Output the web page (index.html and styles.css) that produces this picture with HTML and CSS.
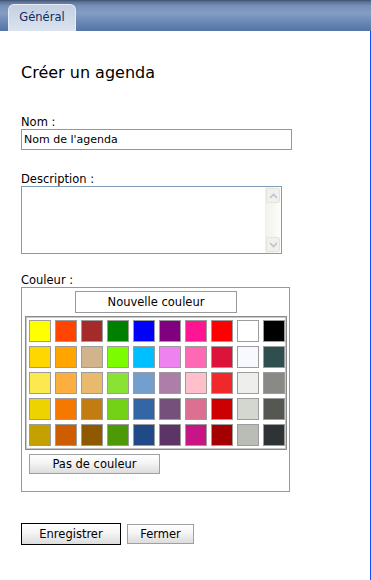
FILE: index.html
```html
<!DOCTYPE html>
<html lang="fr">
<head>
    <meta charset="UTF-8">
    <meta name="viewport" content="width=device-width, initial-scale=1.0">
    <title>Créer un agenda</title>
    <link rel="stylesheet" href="styles.css">
</head>
<body>

    <div class="tabbar">
        <div class="tab">Général</div>
    </div>

    <div class="panel">
        <h1>Créer un agenda</h1>

        <label class="field-label" for="calName">Nom :</label>
        <input type="text" id="calName" class="text-input" value="Nom de l'agenda">

        <label class="field-label label-gap" for="calDesc">Description :</label>
        <div class="textarea-wrap">
            <textarea id="calDesc" class="text-area"></textarea>
            <div class="scrollbar">
                <div class="scroll-btn">
                    <svg width="9" height="6" viewBox="0 0 9 6"><path d="M1 5 L4.5 1.5 L8 5" fill="none" stroke="#b9c3d6" stroke-width="1.6"/></svg>
                </div>
                <div class="scroll-btn">
                    <svg width="9" height="6" viewBox="0 0 9 6"><path d="M1 1 L4.5 4.5 L8 1" fill="none" stroke="#b9c3d6" stroke-width="1.6"/></svg>
                </div>
            </div>
        </div>

        <div class="field-label label-gap-small">Couleur :</div>
        <div class="color-box">
            <button class="new-color">Nouvelle couleur</button>
            <div class="swatches" id="swatches"></div>
            <button class="btn no-color">Pas de couleur</button>
        </div>

        <div class="actions">
            <button class="btn btn-default">Enregistrer</button>
            <button class="btn btn-close">Fermer</button>
        </div>
    </div>

    <script>
        const colors = [
            '#ffff00', '#ff4500', '#a52a2a', '#008000', '#0000ff', '#800080', '#ff1493', '#ff0000', '#ffffff', '#000000',
            '#ffd700', '#ffa500', '#d2b48c', '#7cfc00', '#00bfff', '#ee82ee', '#ff69b4', '#dc143c', '#f8f8ff', '#2f4f4f',
            '#fce94f', '#fcaf3e', '#e9b96e', '#8ae234', '#729fcf', '#ad7fa8', '#ffc0cb', '#ef2929', '#eeeeec', '#888a85',
            '#edd400', '#f57900', '#c17d11', '#73d216', '#3465a4', '#75507b', '#db7093', '#cc0000', '#d3d7cf', '#555753',
            '#c4a000', '#ce5c00', '#8f5902', '#4e9a06', '#204a87', '#5c3566', '#c71585', '#a40000', '#babdb6', '#2e3436'
        ];

        const grid = document.getElementById('swatches');
        colors.forEach(c => {
            const cell = document.createElement('div');
            cell.className = 'swatch';
            cell.style.backgroundColor = c;
            grid.appendChild(cell);
        });
    </script>

</body>
</html>
```

FILE: styles.css
```css
* {
    margin: 0;
    padding: 0;
    box-sizing: border-box;
}

body {
    background-color: #fff;
    font-family: 'DejaVu Sans', sans-serif;
    font-size: 11px;
    color: #000;
    overflow: hidden;
}

.tabbar {
    height: 31px;
    padding: 4px 0 0 8px;
    background: linear-gradient(#3f4f6e 0, #5d7399 2px, #7790b8 6px, #849dc3 13px, #6a88b6 22px, #5475a6 31px);
}

.tab {
    width: 68px;
    height: 27px;
    border: 1px solid #e6ecf5;
    border-bottom: none;
    border-radius: 6px 6px 0 0;
    background: linear-gradient(#c3d0e2, #dbe3ee);
    color: #0e2b5e;
    font-size: 11.5px;
    text-align: center;
    line-height: 24px;
}

.panel {
    height: 549px;
    padding-left: 21px;
    border-right: 1px solid #1349f5;
}

h1 {
    padding-top: 32px;
    font-size: 16px;
    font-weight: 400;
    line-height: 20px;
    height: 52px;
    margin-bottom: 33px;
}

.field-label {
    display: block;
    line-height: 13px;
    font-size: 11.5px;
}

.label-gap {
    margin-top: 23px;
}

.label-gap-small {
    margin-top: 20px;
}

.text-input {
    display: block;
    width: 271px;
    height: 21px;
    border: 1px solid #7f9db9;
    padding: 0 2px;
    font-family: 'DejaVu Sans', sans-serif;
    font-size: 11px;
    color: #000;
    outline: none;
}

.textarea-wrap {
    display: flex;
    width: 261px;
    height: 68px;
    border: 1px solid #7f9db9;
}

.text-area {
    flex: 1;
    border: none;
    resize: none;
    outline: none;
    font-family: 'DejaVu Sans', sans-serif;
    font-size: 11px;
}

.scrollbar {
    width: 16px;
    display: flex;
    flex-direction: column;
    justify-content: space-between;
    padding: 1px 1px 1px 0;
    background: linear-gradient(90deg, #f3f2ec, #fdfdfa);
    border-left: 1px solid #f0efe9;
}

.scroll-btn {
    height: 15px;
    border: 1px solid #e4e3dc;
    border-radius: 2px;
    background: #f1f0ea;
    display: flex;
    align-items: center;
    justify-content: center;
}

.color-box {
    width: 269px;
    height: 205px;
    border: 1px solid #999;
    padding: 3px 2px 0 3px;
}

.new-color {
    display: block;
    width: 162px;
    height: 22px;
    margin: 0 auto 3px 50px;
    border: 1px solid #999;
    background: #fff;
    font-family: 'DejaVu Sans', sans-serif;
    font-size: 11.5px;
    color: #000;
}

.swatches {
    width: 262px;
    height: 134px;
    border: 1px solid #8a8a8a;
    box-shadow: inset 0 0 0 1px #c8c8c8;
    padding: 3px;
    display: grid;
    grid-template-columns: repeat(10, 22px);
    grid-auto-rows: 22px;
    gap: 4px;
}

.swatch {
    border: 1px solid #9c9c9c;
}

.btn {
    border: 1px solid #9f9f9f;
    background: linear-gradient(#ffffff 0, #f4f4f4 45%, #dcdcdc 100%);
    font-family: 'DejaVu Sans', sans-serif;
    font-size: 11.5px;
    color: #000;
}

.no-color {
    display: block;
    width: 131px;
    height: 20px;
    margin: 4px 0 0 4px;
}

.actions {
    display: flex;
    align-items: center;
    gap: 6px;
    margin-top: 31px;
}

.btn-default {
    width: 100px;
    height: 22px;
    border-color: #000;
}

.btn-close {
    width: 67px;
    height: 20px;
}
```
